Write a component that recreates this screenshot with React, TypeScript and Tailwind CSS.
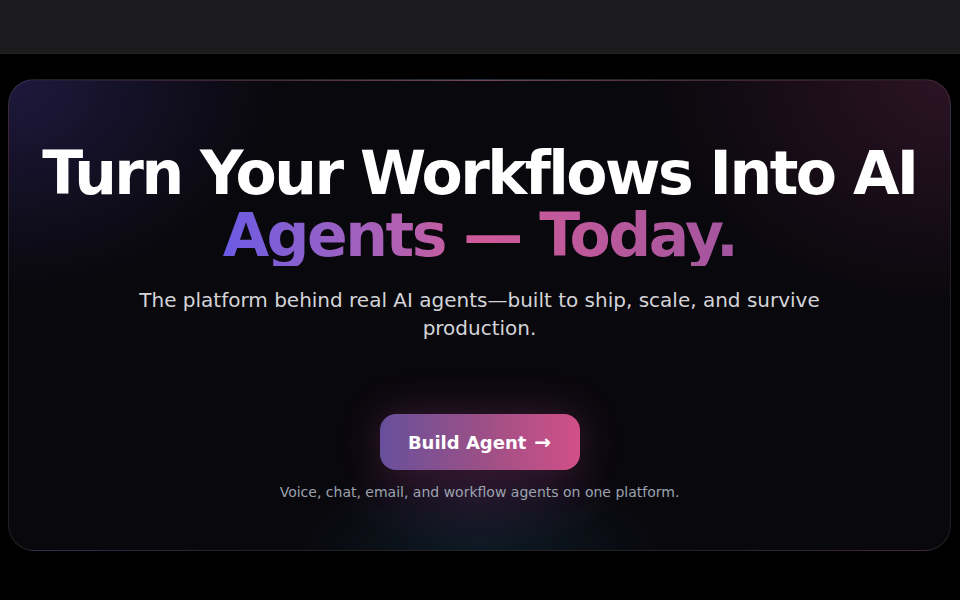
import React from "react";

export default function App() {
  return (
    <div className="min-h-screen bg-black font-['DejaVu_Sans',sans-serif] text-white">
      <div className="h-[54px] bg-[#1c1c1e] border-b border-[#232326]" />
      <div className="px-2 pt-[25px] pr-[9px]">
        <section className="relative overflow-hidden rounded-[26px] border border-white/10 bg-[#09080d] bg-[radial-gradient(ellipse_380px_300px_at_0%_0%,rgba(70,55,150,0.35),transparent_70%),radial-gradient(ellipse_420px_320px_at_100%_0%,rgba(110,40,80,0.35),transparent_70%),radial-gradient(ellipse_260px_110px_at_50%_100%,rgba(20,60,80,0.35),transparent_70%),radial-gradient(ellipse_200px_80px_at_50%_88%,rgba(120,50,120,0.25),transparent_70%)] px-4 pt-[62px] pb-[48px] text-center">
          <div className="absolute inset-x-0 top-0 h-px bg-gradient-to-r from-transparent via-[#a0607e]/70 to-transparent" />
          <h1 className="text-[60px] font-bold leading-[62px] tracking-[-2.5px]">
            <span className="block whitespace-nowrap text-white">Turn Your Workflows Into AI</span>
            <span className="inline-block bg-gradient-to-r from-[#6a5ae4] via-[#d05a98] to-[#a2559f] bg-clip-text text-transparent">
              Agents — Today.
            </span>
          </h1>
          <p className="mx-auto mt-5 max-w-3xl text-[20px] leading-[28px] text-[#d4d4d8]">
            The platform behind real AI agents—built to ship, scale, and survive production.
          </p>
          <div className="mt-[72px] flex justify-center">
            <button className="flex h-[56px] w-[200px] items-center justify-center gap-2 rounded-[16px] bg-gradient-to-r from-[#674f9c] via-[#9a4f86] to-[#d24f88] text-[18px] font-bold text-white shadow-[0_0_40px_rgba(190,80,150,0.28)]">
              <span>Build Agent</span>
              <span className="text-[20px] leading-none">→</span>
            </button>
          </div>
          <p className="mt-3 text-[14px] leading-[20px] text-[#9ca3af]">
            Voice, chat, email, and workflow agents on one platform.
          </p>
        </section>
      </div>
      <div className="pt-[42px] text-center">
        <h2 className="text-[48px] font-bold leading-[56px] text-white">
          Build, deploy, and scale agents
        </h2>
      </div>
    </div>
  );
}
